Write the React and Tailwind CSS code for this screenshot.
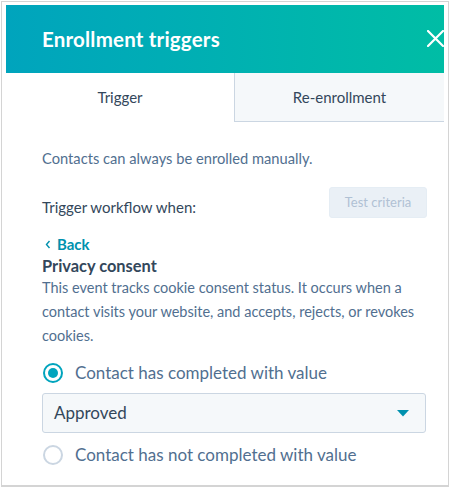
import { useState } from "react";

const font = { fontFamily: "Lato, 'Noto Sans', sans-serif" };

function Radio({ checked, label, onClick }) {
  return (
    <button onClick={onClick} className="flex h-[24px] items-center gap-[12px] text-left">
      <span
        className={`flex h-[20px] w-[20px] shrink-0 items-center justify-center rounded-full border-2 bg-white ${
          checked ? "border-[#00a4bd]" : "border-[#cbd6e2]"
        }`}
      >
        {checked && <span className="h-[10px] w-[10px] rounded-full bg-[#00a4bd]" />}
      </span>
      <span className="text-[17px] leading-[24px] text-[#516f90]">{label}</span>
    </button>
  );
}

export default function App() {
  const [tab, setTab] = useState("trigger");
  const [completed, setCompleted] = useState(true);

  return (
    <div className="h-[492px] w-[450px] bg-white" style={font}>
      <div className="ml-px mt-px h-[486px] w-[448px] border border-b-2 border-[#d4d4d4] pl-[4px] pr-[4px] pt-[3px]">
        <div className="h-full w-[438px] overflow-hidden bg-white">
          <header className="flex h-[68px] items-center bg-gradient-to-r from-[#00a4bd] to-[#00bda5] pl-[36px]">
            <h1 className="text-[20.5px] font-bold tracking-[0.2px] text-white">Enrollment triggers</h1>
            <svg className="ml-auto mt-[-2px]" width="17" height="17" viewBox="0 0 17 17">
              <path d="M1 1L16 16M16 1L1 16" stroke="white" strokeWidth="2.2" strokeLinecap="round" />
            </svg>
          </header>

          <nav className="flex h-[49px]">
            <button
              onClick={() => setTab("trigger")}
              className="w-[228px] bg-white text-[15px] text-[#33475b]"
            >
              Trigger
            </button>
            <button
              onClick={() => setTab("reenroll")}
              className="flex-1 border-b border-l border-[#cbd6e2] bg-[#f5f8fa] text-[15px] text-[#33475b]"
            >
              Re-enrollment
            </button>
          </nav>

          {tab === "trigger" && (
            <div className="pl-[36px] pr-[17px] pt-[24px]">
              <p className="text-[14.7px] leading-[24px] text-[#516f90]">Contacts can always be enrolled manually.</p>

              <div className="mt-[17px] flex items-start justify-between">
                <p className="mt-[8px] text-[15px] leading-[24px] text-[#33475b]">Trigger workflow when:</p>
                <button className="h-[31px] w-[98px] rounded-[3px] border border-[#e5edf4] bg-[#eaf0f6] text-[13px] text-[#b0c1d4]">
                  Test criteria
                </button>
              </div>

              <button className="mt-[14px] flex h-[22px] items-center gap-[6px] pl-[3px] text-[15px] font-bold text-[#0091ae]">
                <svg width="6" height="9" viewBox="0 0 6 9">
                  <path d="M4.5 1L1.5 4.5L4.5 8" fill="none" stroke="#0091ae" strokeWidth="1.4" />
                </svg>
                Back
              </button>

              <h2 className="text-[16.4px] font-bold leading-[21px] text-[#33475b]">Privacy consent</h2>
              <p className="text-[14.5px] leading-[24px] text-[#516f90]">
                This event tracks cookie consent status. It occurs when a contact visits your website, and accepts, rejects, or
                revokes cookies.
              </p>

              <div className="mt-[13px] pl-px">
                <Radio checked={completed} label="Contact has completed with value" onClick={() => setCompleted(true)} />
              </div>

              <div className="mt-[8px] flex h-[40px] w-[384px] items-center justify-between rounded-[3px] border border-[#cbd6e2] bg-[#f5f8fa] pl-[11px] pr-[16px]">
                <span className="text-[17px] text-[#33475b]">Approved</span>
                <svg width="12" height="7" viewBox="0 0 12 7">
                  <path d="M0 0H12L6 6.5Z" fill="#0091ae" />
                </svg>
              </div>

              <div className="mt-[10px] pl-px">
                <Radio
                  checked={!completed}
                  label="Contact has not completed with value"
                  onClick={() => setCompleted(false)}
                />
              </div>
            </div>
          )}
        </div>
      </div>
    </div>
  );
}
